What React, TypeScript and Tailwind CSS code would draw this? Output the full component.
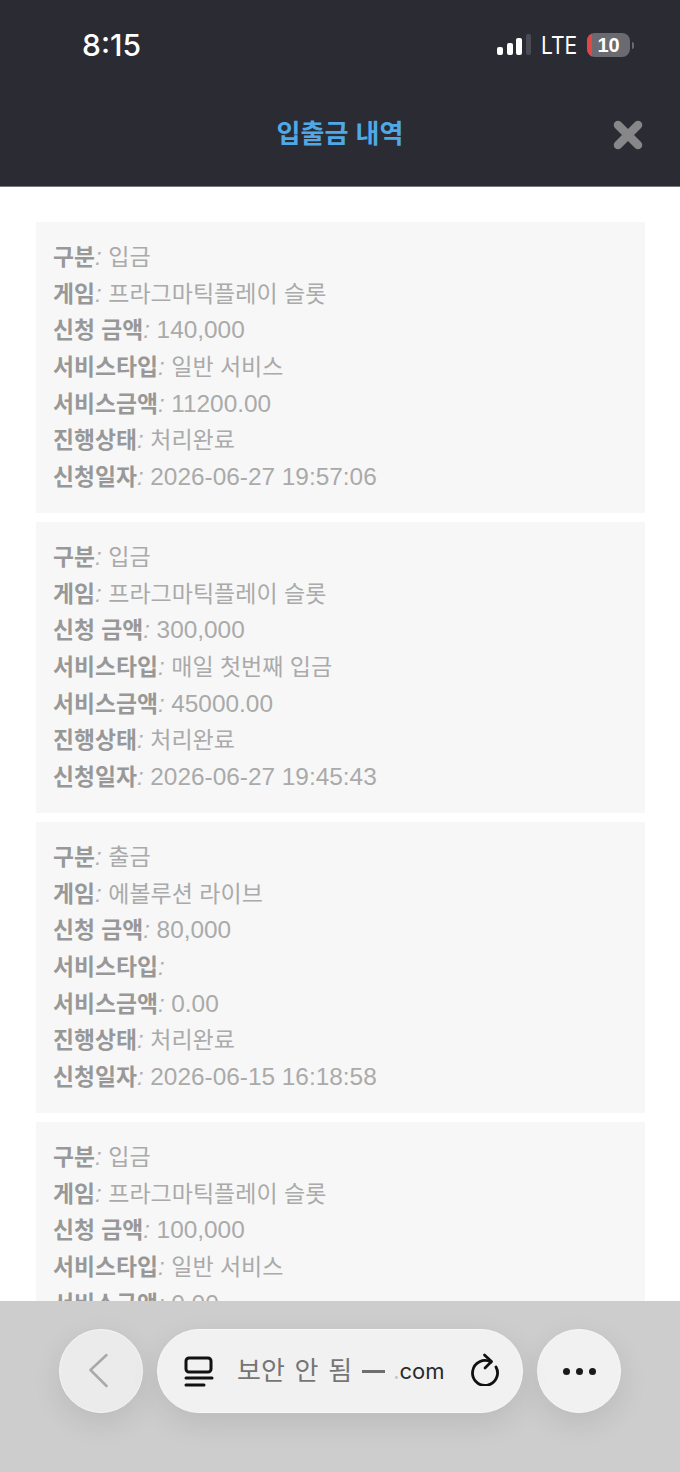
import React from "react";

const font = "font-['Liberation_Sans','Noto_Sans_CJK_KR',sans-serif]";

const cards: [string, string][][] = [
  [["구분", "입금"], ["게임", "프라그마틱플레이 슬롯"], ["신청 금액", "140,000"], ["서비스타입", "일반 서비스"], ["서비스금액", "11200.00"], ["진행상태", "처리완료"], ["신청일자", "2026-06-27 19:57:06"]],
  [["구분", "입금"], ["게임", "프라그마틱플레이 슬롯"], ["신청 금액", "300,000"], ["서비스타입", "매일 첫번째 입금"], ["서비스금액", "45000.00"], ["진행상태", "처리완료"], ["신청일자", "2026-06-27 19:45:43"]],
  [["구분", "출금"], ["게임", "에볼루션 라이브"], ["신청 금액", "80,000"], ["서비스타입", ""], ["서비스금액", "0.00"], ["진행상태", "처리완료"], ["신청일자", "2026-06-15 16:18:58"]],
  [["구분", "입금"], ["게임", "프라그마틱플레이 슬롯"], ["신청 금액", "100,000"], ["서비스타입", "일반 서비스"], ["서비스금액", "0.00"]],
];

function Card({ rows }: { rows: [string, string][] }) {
  return (
    <div className="bg-[#f7f7f7] h-[291px] pl-[17px] pt-[17px] shrink-0">
      {rows.map(([k, v], i) => (
        <div key={i} className="h-[36.7px] leading-[36.7px] text-[24px] text-[#aaaaaa] whitespace-nowrap">
          <span className="font-bold text-[#989898] text-[22.8px]">{k}</span>
          <span className="italic text-[#b0b0b0]">: </span>
          <span className={/[가-힣]/.test(v) ? "text-[23px]" : "text-[24.4px]"}>{v}</span>
        </div>
      ))}
    </div>
  );
}

export default function App() {
  return (
    <div className={`relative w-[680px] h-[1472px] overflow-hidden bg-white ${font}`}>
      <header className="relative h-[187px] bg-[#2a2b33] border-b border-[#77787c]">
        <div className="flex items-center justify-between h-[90px] pl-[82px] pr-[46px]">
          <span className="text-[30px] font-medium text-white font-['Inter',sans-serif]">8:15</span>
          <div className="flex items-center">
            <svg width="36" height="24" viewBox="0 0 36 24" className="mr-[8px]">
              <rect x="0" y="14" width="6" height="8" rx="2" fill="#fff" />
              <rect x="10" y="10" width="6" height="12" rx="2" fill="#fff" />
              <rect x="19" y="5" width="6" height="17" rx="2" fill="#fff" />
              <rect x="29" y="1" width="5" height="21" rx="2" fill="#4a4b52" />
            </svg>
            <span className="inline-block w-[35px] origin-left scale-x-[0.88] text-[24px] leading-[28px] mt-[2px] text-white font-['Inter',sans-serif]">LTE</span>
            <div className="relative ml-[11px] w-[43px] h-[24px] rounded-[8px] bg-[#6a6a70] overflow-hidden flex items-center justify-center">
              <div className="absolute left-0 top-0 bottom-0 w-[5px] bg-[#e04848]" />
              <span className="text-[20px] font-bold text-white leading-none">10</span>
            </div>
            <div className="ml-[2px] w-[2px] h-[7px] rounded-r-sm bg-[#6a6a70]" />
          </div>
        </div>
        <div className="flex items-center justify-center h-[88px]">
          <span className="text-[26px] font-bold text-[#4ea9e6]">입출금 내역</span>
          <svg width="30" height="30" viewBox="0 0 30 30" className="absolute right-[37px] top-[120px]">
            <path d="M5 5 L25 25 M25 5 L5 25" stroke="#87878a" strokeWidth="8.5" strokeLinecap="round" />
          </svg>
        </div>
      </header>

      <main className="flex flex-col gap-[9px] pt-[35px] pl-[36px] pr-[35px]">
        {cards.map((rows, i) => (
          <Card key={i} rows={rows} />
        ))}
      </main>

      <div className="absolute left-0 right-0 bottom-0 h-[171px] bg-[#cdcdcd] pt-[28px] pl-[59px] flex gap-[14px] items-start">
        <div className="w-[84px] h-[84px] rounded-full bg-[#ebebeb] border border-[#f6f6f6] flex items-center justify-center shadow-[0_10px_30px_rgba(0,0,0,0.09)]">
          <svg width="24" height="36" viewBox="0 0 24 36">
            <path d="M17.5 2 L1.5 17 L17.5 33" fill="none" stroke="#a9a9a9" strokeWidth="2.5" strokeLinecap="round" strokeLinejoin="round" />
          </svg>
        </div>
        <div className="relative w-[366px] h-[84px] rounded-[42px] bg-[#f1f1f1] border border-[#f8f8f8] flex items-center shadow-[0_10px_30px_rgba(0,0,0,0.09)]">
          <svg width="30" height="32" viewBox="0 0 30 32" className="ml-[26px] shrink-0">
            <rect x="2" y="3" width="25" height="14" rx="3" fill="none" stroke="#111" strokeWidth="3" />
            <path d="M2 23 H28 M2 30 H20" stroke="#111" strokeWidth="3" strokeLinecap="round" />
          </svg>
          <span className="ml-[23px] text-[26px] text-[#757575] whitespace-nowrap [word-spacing:2.5px]">보안 안 됨</span>
          <span className="ml-[10px] w-[23px] h-[3px] bg-[#6e6e6e]" />
          <span className="ml-[8px] text-[22px] text-[#2a2a2a] font-['Inter',sans-serif] whitespace-nowrap">
            <span className="text-[#c4c4c4]">.</span>com
          </span>
          <svg width="32" height="36" viewBox="10 10 32 36" className="absolute right-[20px] top-[20px]">
            <path d="M31 22 A12.5 12.5 0 1 0 36 27" fill="none" stroke="#111" strokeWidth="2.8" strokeLinecap="round" />
            <path d="M24.5 15 L31.5 21.5 L25 28" fill="none" stroke="#111" strokeWidth="2.8" strokeLinecap="round" strokeLinejoin="round" />
          </svg>
        </div>
        <div className="w-[84px] h-[84px] rounded-full bg-[#f1f1f1] border border-[#f8f8f8] flex items-center justify-center gap-[6px] shadow-[0_10px_30px_rgba(0,0,0,0.09)]">
          <span className="w-[7px] h-[7px] rounded-full bg-[#1a1a1a]" />
          <span className="w-[7px] h-[7px] rounded-full bg-[#1a1a1a]" />
          <span className="w-[7px] h-[7px] rounded-full bg-[#1a1a1a]" />
        </div>
      </div>
    </div>
  );
}
